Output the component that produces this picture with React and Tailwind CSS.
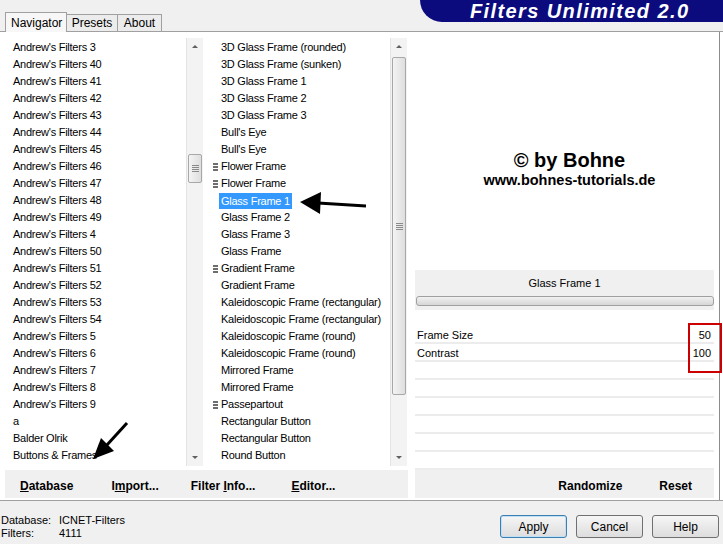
import React from 'react';

const leftItems = [
  "Andrew's Filters 3", "Andrew's Filters 40", "Andrew's Filters 41", "Andrew's Filters 42",
  "Andrew's Filters 43", "Andrew's Filters 44", "Andrew's Filters 45", "Andrew's Filters 46",
  "Andrew's Filters 47", "Andrew's Filters 48", "Andrew's Filters 49", "Andrew's Filters 4",
  "Andrew's Filters 50", "Andrew's Filters 51", "Andrew's Filters 52", "Andrew's Filters 53",
  "Andrew's Filters 54", "Andrew's Filters 5", "Andrew's Filters 6", "Andrew's Filters 7",
  "Andrew's Filters 8", "Andrew's Filters 9", 'a', 'Balder Olrik', 'Buttons & Frames', 'Color Filters',
];

const midItems = [
  { t: '3D Glass Frame (rounded)' },
  { t: '3D Glass Frame (sunken)' },
  { t: '3D Glass Frame 1' },
  { t: '3D Glass Frame 2' },
  { t: '3D Glass Frame 3' },
  { t: "Bull's Eye" },
  { t: "Bull's Eye" },
  { t: 'Flower Frame', icon: true },
  { t: 'Flower Frame', icon: true },
  { t: 'Glass Frame 1', sel: true },
  { t: 'Glass Frame 2' },
  { t: 'Glass Frame 3' },
  { t: 'Glass Frame' },
  { t: 'Gradient Frame', icon: true },
  { t: 'Gradient Frame' },
  { t: 'Kaleidoscopic Frame (rectangular)' },
  { t: 'Kaleidoscopic Frame (rectangular)' },
  { t: 'Kaleidoscopic Frame (round)' },
  { t: 'Kaleidoscopic Frame (round)' },
  { t: 'Mirrored Frame' },
  { t: 'Mirrored Frame' },
  { t: 'Passepartout', icon: true },
  { t: 'Rectangular Button' },
  { t: 'Rectangular Button' },
  { t: 'Round Button' },
  { t: 'Round Frame' },
];

function ScrollBar({ thumbTop, thumbH }) {
  return (
    <div className="w-[17px] h-full flex flex-col bg-[#f3f3f3] border-l border-[#e4e4e4]">
      <div className="h-[17px] flex items-center justify-center">
        <div className="w-0 h-0 border-l-[3px] border-r-[3px] border-b-[3px] border-l-transparent border-r-transparent border-b-[#606060]" />
      </div>
      <div className="flex-1 relative">
        <div
          className="absolute left-[1px] right-[1px] rounded-[2px] border border-[#a8a8a8] bg-gradient-to-r from-[#f4f4f4] to-[#dedede] flex flex-col items-center justify-center gap-[1px]"
          style={{ top: thumbTop, height: thumbH }}
        >
          <div className="w-[7px] h-px bg-[#8a8a8a]" />
          <div className="w-[7px] h-px bg-[#8a8a8a]" />
          <div className="w-[7px] h-px bg-[#8a8a8a]" />
          <div className="w-[7px] h-px bg-[#8a8a8a]" />
        </div>
      </div>
      <div className="h-[17px] flex items-center justify-center">
        <div className="w-0 h-0 border-l-[3px] border-r-[3px] border-t-[3px] border-l-transparent border-r-transparent border-t-[#606060]" />
      </div>
    </div>
  );
}

function Grip() {
  return (
    <div className="w-[5px] flex flex-col gap-px">
      <div className="h-[2px] bg-[#6e6e6e]" />
      <div className="h-[2px] bg-[#6e6e6e]" />
      <div className="h-[2px] bg-[#6e6e6e]" />
    </div>
  );
}

function Btn({ children, primary }) {
  return (
    <div
      className={`w-[67px] h-[23px] rounded-[3px] border flex items-center justify-center text-[12px] bg-gradient-to-b from-[#f6f6f6] to-[#dddddd] ${
        primary ? 'border-[#3c7fb1] shadow-[inset_0_0_0_1px_#bfe0f5]' : 'border-[#707070]'
      }`}
    >
      {children}
    </div>
  );
}

export default function App() {
  return (
    <div className="w-[723px] h-[544px] relative overflow-hidden bg-[#f0f0f0] text-black font-['Liberation_Sans',Arial,sans-serif]">
      {/* top: tabs + logo */}
      <div className="h-[32px] flex border-b border-[#a0a0a0]">
        <div className="pl-[5px] flex items-end">
          <div className="w-[62px] h-[20px] bg-[#f7f7f7] border border-b-0 border-[#a0a0a0] text-[12px] leading-[20px] pl-[5px] -mb-px relative z-10">
            Navigator
          </div>
          <div className="w-[51px] h-[17px] bg-[#ececec] border border-b-0 border-l-0 border-[#a0a0a0] text-[12px] leading-[17px] text-center">
            Presets
          </div>
          <div className="w-[44px] h-[17px] bg-[#ececec] border border-b-0 border-l-0 border-[#a0a0a0] text-[12px] leading-[17px] text-center">
            About
          </div>
        </div>
        <div className="ml-auto w-[303px] h-[22px] self-start bg-[#0b0b7e] rounded-bl-[34px] pl-[50px] flex items-center">
          <span className="text-white italic font-bold text-[20px] tracking-[1.4px] leading-none whitespace-nowrap">
            Filters Unlimited 2.0
          </span>
        </div>
      </div>

      {/* main */}
      <div className="h-[468px] flex bg-white">
        {/* left block */}
        <div className="w-[410px] flex flex-col">
          <div className="h-[438px] pt-[6px] pb-[4px] flex">
            {/* left list */}
            <div className="ml-[5px] w-[181px] pt-px overflow-hidden text-[11px] tracking-[-0.25px]">
              {leftItems.map((t, i) => (
                <div key={i} className="h-[17px] leading-[17px] pl-[8px] whitespace-nowrap">{t}</div>
              ))}
            </div>
            <ScrollBar thumbTop={99} thumbH={29} />
            {/* middle list */}
            <div className="ml-[9px] w-[178px] pt-px overflow-hidden text-[11px] tracking-[-0.25px]">
              {midItems.map((it, i) => (
                <div key={i} className="h-[17px] flex items-center pl-[1px] whitespace-nowrap">
                  <div className="w-[6px]">{it.icon && <Grip />}</div>
                  {it.sel ? (
                    <span className="bg-[#3399ff] text-white px-[2px] leading-[16px]">{it.t}</span>
                  ) : (
                    <span className="pl-[2px] leading-[17px]">{it.t}</span>
                  )}
                </div>
              ))}
            </div>
            <ScrollBar thumbTop={2} thumbH={338} />
          </div>
          <div className="h-[28px] ml-[5px] mr-[2px] bg-[#f0f0f0] flex items-center pt-[3px] text-[12px] font-bold pl-[15px]">
            <span><u>D</u>atabase</span>
            <span className="ml-[38px]">I<u>m</u>port...</span>
            <span className="ml-[32px]">Filter <u>I</u>nfo...</span>
            <span className="ml-[36px]"><u>E</u>ditor...</span>
          </div>
        </div>

        {/* right panel */}
        <div className="ml-[4px] w-[306px] border-r border-[#8c8c8c] flex flex-col">
          <div className="h-[238px] pt-[116px] pl-[6px] text-center font-bold">
            <div className="text-[20px] leading-[24px]">© by Bohne</div>
            <div className="text-[14.5px] leading-[17px]">www.bohnes-tutorials.de</div>
          </div>
          <div className="h-[40px] ml-[1px] w-[299px] bg-[#f0f0f0] pt-[7px] flex flex-col items-center">
            <div className="text-[11px] leading-[13px]">Glass Frame 1</div>
            <div className="mt-[6px] w-[298px] h-[10px] rounded-[3px] border border-[#a0a0a0] bg-gradient-to-b from-[#f2f2f2] to-[#d6d6d6]" />
          </div>
          <div className="h-[16px]" />
          <div className="ml-[1px] w-[299px] text-[11px]">
            {[['Frame Size', '50'], ['Contrast', '100'], ['', ''], ['', ''], ['', ''], ['', ''], ['', ''], ['', '']].map(
              ([l, v], i) => (
                <div key={i} className="h-[18px] border-b-2 border-[#ececec] flex items-center justify-between pl-[2px] pr-[3px] pt-px leading-[16px]">
                  <span>{l}</span>
                  <span>{v}</span>
                </div>
              )
            )}
          </div>
          <div className="h-[28px] ml-[1px] w-[299px] bg-[#f0f0f0] flex items-center pt-[3px] justify-end text-[12px] font-bold pr-[22px]">
            <span>Randomize</span>
            <span className="ml-[37px]">Reset</span>
          </div>
        </div>
      </div>

      {/* footer */}
      <div className="border-t border-[#a0a0a0] h-[44px] flex justify-between">
        <div className="pt-[13px] pl-[1px] text-[11px] leading-[13px]">
          <div className="flex"><span className="w-[58px]">Database:</span><span>ICNET-Filters</span></div>
          <div className="flex"><span className="w-[58px]">Filters:</span><span>4111</span></div>
        </div>
        <div className="pt-[14px] pr-[4px] flex gap-[9px]">
          <Btn primary>Apply</Btn>
          <Btn>Cancel</Btn>
          <Btn>Help</Btn>
        </div>
      </div>

      {/* red highlight box */}
      <div className="absolute left-[688px] top-[323px] w-[34px] h-[50px] border-2 border-[#cc0000]" />

      {/* arrows */}
      <svg className="absolute inset-0 pointer-events-none" width="723" height="544" viewBox="0 0 723 544">
        <line x1="366" y1="206" x2="318" y2="203" stroke="#000" strokeWidth="3" />
        <polygon points="300,202 321,192 320,214" fill="#000" />
        <line x1="127" y1="423" x2="106" y2="446" stroke="#000" strokeWidth="3" />
        <polygon points="93,459 114,451 101,438" fill="#000" />
      </svg>
    </div>
  );
}
